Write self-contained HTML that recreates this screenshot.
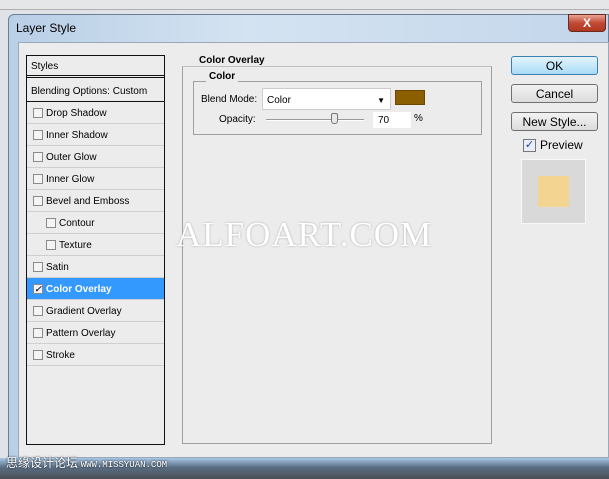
<!DOCTYPE html>
<html><head><style>
*{margin:0;padding:0;box-sizing:border-box}
body{width:609px;height:479px;overflow:hidden;background:#dfe3e8;font-family:"Liberation Sans",sans-serif;font-size:10px;color:#000;position:relative}
.a{position:absolute}
.row{position:absolute;left:27px;width:137px;height:22px;border-bottom:1px solid #cfcfcf;font-size:10px;line-height:24px;padding-left:19px}
.row i{position:absolute;left:6px;top:6px;width:10px;height:10px;border:1px solid #8a8a8a;background:#f4f4f4}
.row.s{padding-left:32px}.row.s i{left:19px}
.btn{position:absolute;left:511px;width:87px;height:19px;border:1px solid #707070;border-radius:3px;background:linear-gradient(#f2f2f2,#dcdcdc);text-align:center;font-family:"Liberation Sans",sans-serif;font-size:12px;line-height:18px}
</style></head><body>
<div class="a" style="left:0;top:0;width:609px;height:10px;background:#e4e6e8;border-bottom:1px solid #b0b0b0"></div>
<div class="a" style="left:8px;top:14px;width:601px;height:450px;background:linear-gradient(90deg,#b9cfe6,#d4e3f2 40%,#c3d6ea);border:1px solid #6a7f96;border-radius:6px 0 0 0"></div>
<div class="a" style="left:16px;top:21px;font-family:'Liberation Sans',sans-serif;font-size:12px">Layer Style</div>
<div class="a" style="left:568px;top:14px;width:38px;height:18px;background:linear-gradient(#e8a393,#c24a34 50%,#b03820);border:1px solid #6b2a20;border-radius:0 0 4px 4px;color:#fff;font-weight:bold;font-size:12px;text-align:center;line-height:16px">X</div>
<div class="a" style="left:18px;top:42px;width:591px;height:416px;background:#ececec;border:1px solid #9aa9b8"></div>
<div class="a" style="left:26px;top:55px;width:139px;height:390px;border:1px solid #111;background:#ececec"></div>
<div class="a" style="left:27px;top:56px;width:137px;height:22px;border-bottom:3px double #111;padding-left:4px;line-height:22px">Styles</div>
<div class="a" style="left:27px;top:80px;width:137px;height:22px;border-bottom:1px solid #111;padding-left:4px;line-height:23px">Blending Options: Custom</div>
<div class="row" style="top:102px"><i></i>Drop Shadow</div>
<div class="row" style="top:124px"><i></i>Inner Shadow</div>
<div class="row" style="top:146px"><i></i>Outer Glow</div>
<div class="row" style="top:168px"><i></i>Inner Glow</div>
<div class="row" style="top:190px"><i></i>Bevel and Emboss</div>
<div class="row s" style="top:212px"><i></i>Contour</div>
<div class="row s" style="top:234px"><i></i>Texture</div>
<div class="row" style="top:256px"><i></i>Satin</div>
<div class="row" style="top:278px;background:#3399ff;color:#fff;font-weight:bold"><i style="font-size:9px;line-height:8px;color:#224;text-align:center">✓</i>Color Overlay</div>
<div class="row" style="top:300px"><i></i>Gradient Overlay</div>
<div class="row" style="top:322px"><i></i>Pattern Overlay</div>
<div class="row" style="top:344px"><i></i>Stroke</div>
<div class="a" style="left:182px;top:66px;width:310px;height:378px;border:1px solid #a0a0a0;border-top-color:#c0c0c0"></div>
<div class="a" style="left:196px;top:55px;background:#ececec;padding:0 3px;font-weight:bold">Color Overlay</div>
<div class="a" style="left:193px;top:81px;width:289px;height:54px;border:1px solid #a0a0a0"></div>
<div class="a" style="left:206px;top:71px;background:#ececec;padding:0 3px;font-weight:bold">Color</div>
<div class="a" style="left:201px;top:94px">Blend Mode:</div>
<div class="a" style="left:262px;top:88px;width:129px;height:22px;background:#fff;border:1px solid #ccc;padding-left:4px;line-height:23px">Color<span style="position:absolute;right:5px;top:0;font-size:8px">▼</span></div>
<div class="a" style="left:395px;top:90px;width:30px;height:15px;background:#8b5e00;border:1px solid #6a4800"></div>
<div class="a" style="left:219px;top:114px">Opacity:</div>
<div class="a" style="left:266px;top:119px;width:98px;height:2px;border-top:1px solid #999;border-bottom:1px solid #fff"></div>
<div class="a" style="left:331px;top:113px;width:7px;height:11px;background:#e8e8e8;border:1px solid #777;border-radius:2px 2px 3px 3px"></div>
<div class="a" style="left:373px;top:112px;width:38px;height:16px;background:#fff;padding-left:5px;line-height:17px">70</div>
<div class="a" style="left:414px;top:113px">%</div>
<div class="btn" style="top:56px;background:linear-gradient(#e4f4fc,#a9dbf6);border-color:#3c7fb1">OK</div>
<div class="btn" style="top:84px">Cancel</div>
<div class="btn" style="top:112px">New Style...</div>
<div class="a" style="left:523px;top:139px;width:13px;height:13px;border:1px solid #777;background:#e8eefa;color:#22449a;font-size:11px;line-height:11px;text-align:center">✓</div>
<div class="a" style="left:540px;top:138px;font-family:'Liberation Sans',sans-serif;font-size:12px">Preview</div>
<div class="a" style="left:521px;top:159px;width:65px;height:65px;background:#d9d9d9;border:1px solid #f8f8f8"></div>
<div class="a" style="left:538px;top:176px;width:31px;height:31px;background:#f3d591"></div>
<div class="a" style="left:176px;top:215px;font-family:'Liberation Serif',serif;font-size:35px;color:#fff;letter-spacing:1px;text-shadow:0 0 2px #aaa">ALFOART.COM</div>
<div class="a" style="left:0;top:458px;width:609px;height:21px;background:linear-gradient(#a9c8e6,#5a6e84 45%,#4a4f55);"></div>
<div class="a" style="left:6px;top:454px;font-family:'Noto Sans CJK SC',sans-serif;font-size:12px;color:#fff;text-shadow:0 0 2px #000">思缘设计论坛 <span style="font-family:'Liberation Mono',monospace;font-size:9px">WWW.MISSYUAN.COM</span></div>
</body></html>
